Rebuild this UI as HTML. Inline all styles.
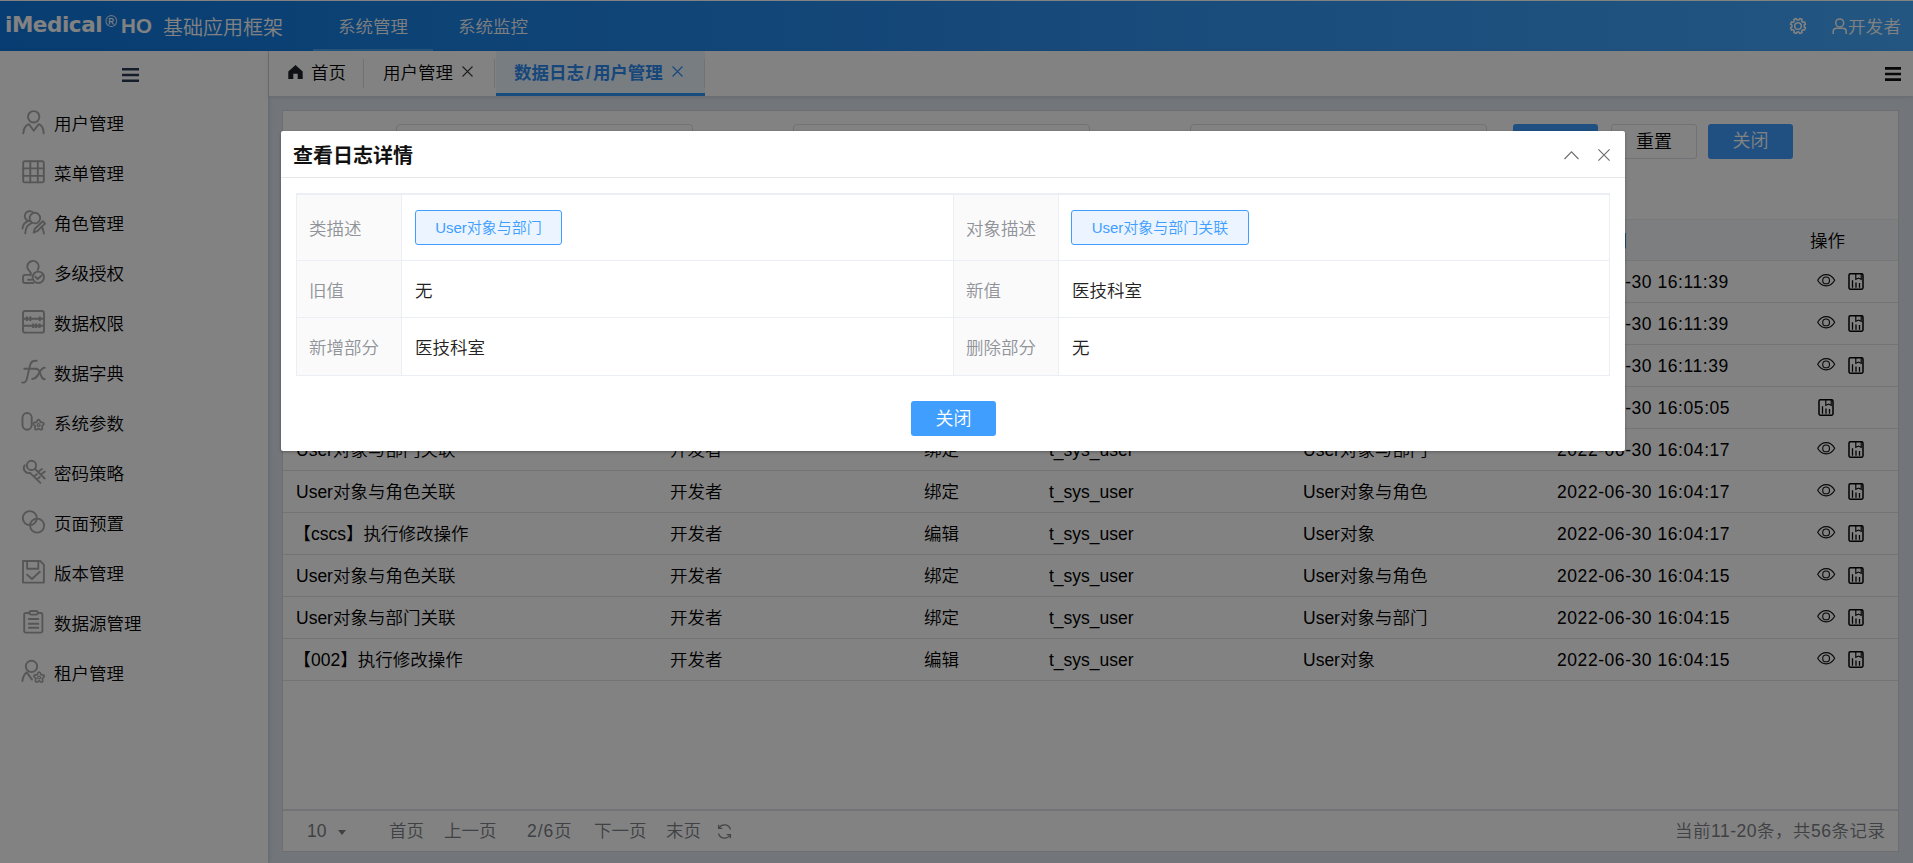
<!DOCTYPE html>
<html lang="zh-CN">
<head>
<meta charset="utf-8">
<title>iMedical HO 基础应用框架</title>
<style>
*{box-sizing:border-box;margin:0;padding:0}
html,body{width:1913px;height:863px;overflow:hidden;background:#dfe6ee}
body{font-family:"Liberation Sans","Noto Sans CJK SC DemiLight","Noto Sans CJK SC",sans-serif;font-size:17.5px;color:#000;position:relative}
.bd{font-family:"Liberation Sans","Noto Sans CJK SC",sans-serif;font-weight:bold}
.abs{position:absolute}
svg{display:block;overflow:visible}
/* header */
#topline{left:0;top:0;width:1913px;height:1px;background:#fff}
#hdr{left:0;top:1px;width:1913px;height:50px;background:linear-gradient(90deg,#0f79df 0%,#2b8eee 50%,#47a9ff 100%)}
#logo{left:5px;top:9px;height:32px;line-height:32px;white-space:nowrap;color:#fff}
#logo b{font-family:"DejaVu Sans","Liberation Sans",sans-serif;font-size:21.5px;font-weight:bold;letter-spacing:-.45px}
#logo sup{font-size:16px;font-weight:normal;position:relative;top:1px;margin-left:3px;vertical-align:6px;line-height:0}
#logo i{font-style:normal;font-weight:bold;font-size:20.5px;letter-spacing:.2px;margin-left:4px;position:relative;top:1px}
#appname{left:163px;top:13px;font-size:20px;line-height:30px;color:#fff;white-space:nowrap}
.nav{top:1px;height:50px;line-height:52px;color:#fff;font-size:17.5px;white-space:nowrap;opacity:.96}
#navline{left:313px;top:49px;width:120px;height:2px;background:#4aa5f6}
/* sidebar */
#side{left:0;top:51px;width:268px;height:812px;background:#fff;box-shadow:1px 0 4px rgba(0,21,41,.12)}
.mi{left:54px;height:30px;line-height:32px;color:#000;white-space:nowrap}
.ic{left:21px;width:26px;height:26px}
.ic svg{width:26px;height:26px;fill:none;stroke:#aaa;stroke-width:1.9;stroke-linecap:round;stroke-linejoin:round}
/* tabs */
#tabs{left:269px;top:51px;width:1644px;height:45px;background:#fff;box-shadow:0 1px 4px rgba(0,21,41,.1)}
.tab{top:51px;height:45px;line-height:44px;white-space:nowrap;color:#000}
.sep{top:59px;width:1px;height:29px;background:#dcdfe6}
/* main panel */
#panel{left:282px;top:110px;width:1617px;height:742px;background:#fff;border:1px solid #d5d8dc}
.inp{top:124px;width:297px;height:35px;border:1px solid #dcdfe6;border-radius:4px;background:#fff}
.btn{top:124px;width:85px;height:35px;border-radius:3px;text-align:center;line-height:35px;font-size:18px;white-space:nowrap}
.btn.p{background:#409eff;color:#fff}
.btn.d{background:#fff;color:#000;border:1px solid #dcdfe6}
#thead{left:283px;top:219px;width:1615px;height:42px;background:#f5f7fa;border-top:1px solid #ebeef5;border-bottom:1px solid #e4e7ed}
.th{top:219px;height:42px;line-height:44px;white-space:nowrap;color:#000}
.row{left:283px;width:1615px;height:42px;border-bottom:1px solid #e3e4e6}
.c{position:absolute;top:0;height:42px;line-height:43px;white-space:nowrap;color:#000}
.c1{left:13px}.c2{left:387px}.c3{left:641px}.c4{left:766px}.c5{left:1020px}.c6{left:1274px;letter-spacing:.56px}
.eye{position:absolute;left:1533.500px;top:12.800px;width:18.400px;height:12.600px}
.dl{position:absolute;left:1565px;top:12px;width:16px;height:17px}
.dl.solo{left:1535px}
#pager{left:283px;top:809px;width:1615px;height:42px;border-top:2px solid #dfe2e8;background:#fff;color:#7a7d82}
.pg{top:811px;height:40px;line-height:40px;white-space:nowrap;color:#7d8085}
/* overlay + modal */
#mask{left:0;top:0;width:1913px;height:863px;background:rgba(0,0,0,.49)}
#dlg{left:281px;top:131px;width:1344px;height:320px;background:#fff;border-radius:2px;box-shadow:0 1px 3px rgba(0,0,0,.3)}
#dlgt{left:12px;top:10px;height:30px;line-height:31px;font-size:20px;font-weight:bold;color:#111;font-family:"Liberation Sans","Noto Sans CJK SC",sans-serif;white-space:nowrap}
#dlgl{left:0;top:46px;width:1344px;height:1px;background:#e6e6e6}
#dt{left:15px;top:62px;width:1314px;height:183px;border:1px solid #ebeef5;border-top-width:2px}
.lab{position:absolute;padding-top:2px;background:#fafafa;color:#909399;white-space:nowrap;padding-left:12px;border-right:1px solid #ebeef5;border-left:1px solid #ebeef5}
.val{position:absolute;padding-top:2px;color:#222;white-space:nowrap;padding-left:13px}
.hl{position:absolute;left:0;width:1312px;height:1px;background:#ebeef5}
.tag{position:absolute;top:15px;height:35px;line-height:33px;border:1px solid #409eff;border-radius:3px;background:#ecf5ff;color:#409eff;font-size:15px;text-align:center;white-space:nowrap}
#dbtn{left:630px;top:270px;width:85px;height:35px;background:#409eff;border-radius:3px;color:#fff;font-size:18px;line-height:36px;text-align:center}
</style>
</head>
<body>
<!-- HEADER -->
<div class="abs" id="hdr"></div>
<div class="abs" id="topline"></div>
<div class="abs" id="logo"><b>iMedical</b><sup>®</sup><i>HO</i></div>
<div class="abs" id="appname">基础应用框架</div>
<div class="abs nav" style="left:338px">系统管理</div>
<div class="abs nav" style="left:458px">系统监控</div>
<div class="abs" id="navline"></div>
<div class="abs" style="left:1787.600px;top:16.100px;width:20px;height:20px"><svg viewBox="0 0 20 20" width="20" height="20" fill="none" stroke="#fff" stroke-width="1.500" stroke-linejoin="round"><circle cx="10" cy="10" r="3.300"/><path d="M16.12 10.97L17.51 11.68L16.50 14.13L15.02 13.64L13.64 15.02L14.13 16.50L11.68 17.51L10.97 16.12L9.03 16.12L8.32 17.51L5.87 16.50L6.36 15.02L4.98 13.64L3.50 14.13L2.49 11.68L3.88 10.97L3.88 9.03L2.49 8.32L3.50 5.87L4.98 6.36L6.36 4.98L5.87 3.50L8.32 2.49L9.03 3.88L10.97 3.88L11.68 2.49L14.13 3.50L13.64 4.98L15.02 6.36L16.50 5.87L17.51 8.32L16.12 9.03z"/></svg></div>
<div class="abs" style="left:1832px;top:18px;width:15px;height:16px"><svg viewBox="0 0 15 16" width="15" height="16" fill="none" stroke="#fff" stroke-width="1.500"><circle cx="7.700" cy="4.900" r="4"/><path d="M1.200 16v-2.400c0-2.200 1.400-3.400 3.400-3.400h6.200c2 0 3.400 1.200 3.400 3.400V16"/></svg></div>
<div class="abs nav" style="left:1848px;opacity:1;letter-spacing:.3px">开发者</div>

<!-- SIDEBAR -->
<div class="abs" id="side"></div>
<div class="abs" style="left:122px;top:68px;width:17px;height:14px"><svg viewBox="0 0 17 14" width="17" height="14"><path d="M0 1.200h17M0 7h17M0 12.800h17" stroke="#2b3a55" stroke-width="2.400"/></svg></div>

<!--MENU-->
<div class="abs ic" style="top:109px"><svg viewBox="0 0 26 26"><circle cx="12.700" cy="7.800" r="5.700"/><path d="M2.300 24.400C2.600 20 4.500 16.400 8 15.200L12.800 21.800L17.600 15.200C21 16.400 22.500 20 22.700 24.400"/></svg></div><div class="abs mi" style="top:108px">用户管理</div>
<div class="abs ic" style="top:159px"><svg viewBox="0 0 26 26"><rect x="2.200" y="2.300" width="20.600" height="21.100" rx="1.500"/><path d="M2.200 9.400h20.600M2.200 16.900h20.600M9.300 2.300v21.100M16.800 2.300v21.100"/></svg></div><div class="abs mi" style="top:158px">菜单管理</div>
<div class="abs ic" style="top:209px"><svg viewBox="0 0 26 26"><circle cx="13.900" cy="9.100" r="5.300"/><path d="M9.300 11.900A4.900 4.900 0 1 1 12.400 3.900"/><path d="M1.500 19.500C2 15.500 4 13 7.300 12"/><path d="M4.200 24.400C4.500 19 6.500 15.500 10.200 14.300"/><path d="M12.600 23.500l1.200-3.700 8-7.600 2.300 2.400-8 7.600z"/><path d="M20.600 17.600C21.900 19.300 22.600 21.600 22.900 24.600"/></svg></div><div class="abs mi" style="top:208px">角色管理</div>
<div class="abs ic" style="top:259px"><svg viewBox="0 0 26 26"><path d="M9.600 15.900c.6-1.200 .2-2.500-.87-3.630A5.700 5.700 0 1 1 16.670 10.870"/><path d="M9.600 15.900H4.400C2.900 15.900 2 16.800 2 18.300V21.900c0 1.300.9 2.100 2.100 2.100h8.300"/><path d="M7.100 20.700h3.400"/><circle cx="17.300" cy="18.300" r="5.700"/><path d="M14.200 17.600l2.400 2.400 4-3.500"/></svg></div><div class="abs mi" style="top:258px">多级授权</div>
<div class="abs ic" style="top:309px"><svg viewBox="0 0 26 26"><rect x="2" y="2" width="21" height="21.600" rx="2.200"/><path d="M2 9.800h21M2 16.800h21"/><path d="M5.900 7.600v4.400M9.300 7.600v4.400M18.800 7.600v4.400M12.200 14.600v4.400M15.100 14.600v4.400M18.500 14.600v4.400" stroke-width="2.200" stroke-linecap="butt"/></svg></div><div class="abs mi" style="top:308px">数据权限</div>
<div class="abs ic" style="top:359px"><svg viewBox="0 0 26 26"><path d="M1.200 23.400c2.300.7 3.900-.4 4.600-3.300L9 6.400c.8-3.200 3-5 6.700-4.500"/><path d="M3.300 9.800h12"/><path d="M15.200 9.800c2 .2 2.900 1.500 3.700 3.700l1.100 3.100c.8 2.300 1.900 3.600 3.700 3.600"/><path d="M23.700 8.700c-2.300 0-3.500 1.400-5 4.300-1.800 3.600-3.500 7-7.500 7"/></svg></div><div class="abs mi" style="top:358px">数据字典</div>
<div class="abs ic" style="top:409px"><svg viewBox="0 0 26 26"><rect x="1.500" y="4" width="9.200" height="16.700" rx="4.600"/><path d="M22.10 16.10L21.58 16.52L21.15 16.86L20.93 17.18L20.92 17.58L21.06 18.10L21.24 18.75L21.32 19.45L21.19 20.09L20.83 20.55L20.28 20.75L19.63 20.67L18.99 20.38L18.43 20.01L17.98 19.71L17.60 19.60L17.22 19.71L16.77 20.01L16.21 20.38L15.57 20.67L14.92 20.75L14.37 20.55L14.01 20.09L13.88 19.45L13.96 18.75L14.14 18.10L14.28 17.58L14.27 17.18L14.05 16.86L13.62 16.52L13.10 16.10L12.63 15.58L12.35 14.98L12.37 14.40L12.70 13.92L13.27 13.60L13.96 13.45L14.63 13.42L15.17 13.40L15.54 13.27L15.78 12.95L15.97 12.45L16.21 11.82L16.56 11.21L17.04 10.76L17.60 10.60L18.16 10.76L18.64 11.21L18.99 11.82L19.23 12.45L19.42 12.95L19.66 13.27L20.03 13.40L20.57 13.42L21.24 13.45L21.93 13.60L22.50 13.92L22.83 14.40L22.85 14.98L22.57 15.58z" stroke-width="1.700"/><circle cx="17.600" cy="16.100" r="1.400" stroke-width="1.300"/></svg></div><div class="abs mi" style="top:408px">系统参数</div>
<div class="abs ic" style="top:459px"><svg viewBox="0 0 26 26"><circle cx="10.500" cy="6.400" r="4.600"/><path d="M13.900 9.800l9.800 9.700M17.300 12.700l3.600-2.800M20.300 15.300l3.600-2.800"/><path d="M3.700 6.200A5 5 0 0 0 9 13.900"/><path d="M9 13.900l10.400 10M13 17.500l2.900-2.300M15.900 20.400l2.900-2.300"/></svg></div><div class="abs mi" style="top:458px">密码策略</div>
<div class="abs ic" style="top:509px"><svg viewBox="0 0 26 26"><circle cx="8.800" cy="9.100" r="7"/><circle cx="16.100" cy="16.600" r="7"/></svg></div><div class="abs mi" style="top:508px">页面预置</div>
<div class="abs ic" style="top:559px"><svg viewBox="0 0 26 26"><path d="M2 2h17.200l3.700 3.700v17.900H2z"/><path d="M6.100 2v7.800h11.200V2"/><path d="M6.100 15.600l4.900 4.400 7.800-7.300"/></svg></div><div class="abs mi" style="top:558px">版本管理</div>
<div class="abs ic" style="top:609px"><svg viewBox="0 0 26 26"><path d="M8.400 4H4.700C3.800 4 3.200 4.600 3.200 5.500v16.600c0 .9.600 1.500 1.500 1.500h15.200c.9 0 1.500-.6 1.500-1.500V5.500c0-.9-.6-1.500-1.500-1.500h-3.100"/><rect x="8.400" y="2" width="8.400" height="3.600" rx="1.800"/><path d="M7.100 10h11M7.100 14.700h11M7.100 18.800h11" stroke-width="2.100" stroke-linecap="butt"/></svg></div><div class="abs mi" style="top:608px">数据源管理</div>
<div class="abs ic" style="top:659px"><svg viewBox="0 0 26 26"><circle cx="10.500" cy="7.400" r="5.700"/><path d="M1.400 22C2 18 3.500 15 5.800 13.400L11 20.600"/><path d="M22.50 18.50L21.98 18.91L21.56 19.23L21.33 19.55L21.33 19.94L21.48 20.45L21.66 21.09L21.74 21.78L21.62 22.41L21.27 22.87L20.73 23.06L20.09 22.98L19.46 22.68L18.91 22.31L18.47 22.01L18.10 21.90L17.73 22.01L17.29 22.31L16.74 22.68L16.11 22.98L15.47 23.06L14.93 22.87L14.58 22.41L14.46 21.78L14.54 21.09L14.72 20.45L14.87 19.94L14.87 19.55L14.64 19.23L14.22 18.91L13.70 18.50L13.23 17.99L12.95 17.41L12.96 16.83L13.29 16.36L13.86 16.05L14.54 15.91L15.20 15.89L15.74 15.87L16.10 15.75L16.33 15.44L16.51 14.94L16.74 14.32L17.08 13.71L17.55 13.26L18.10 13.10L18.65 13.26L19.12 13.71L19.46 14.32L19.69 14.94L19.87 15.44L20.10 15.75L20.46 15.87L21.00 15.89L21.66 15.91L22.34 16.05L22.91 16.36L23.24 16.83L23.25 17.41L22.97 17.99z" stroke-width="1.700"/><circle cx="18.100" cy="18.500" r="1.400" stroke-width="1.300"/></svg></div><div class="abs mi" style="top:658px">租户管理</div>
<!--/MENU-->

<!-- TABS -->
<div class="abs" id="tabs"></div>
<div class="abs" style="left:496px;top:51px;width:209px;height:45px;background:#ebf5ff;border-bottom:3px solid #2b95f8"></div>
<div class="abs" style="left:288px;top:65px;width:15px;height:14px"><svg viewBox="0 0 15 14" width="15" height="14"><path d="M7.500 0L0.300 6.400V14H5.300V8.800H9.700V14H14.700V6.400z" fill="#1f2329"/></svg></div>
<div class="abs tab" style="left:311px">首页</div>
<div class="abs sep" style="left:363px"></div>
<div class="abs tab" style="left:383px">用户管理</div>
<div class="abs" style="left:462px;top:66px;width:11px;height:11px"><svg viewBox="0 0 11 11" width="11" height="11"><path d="M0.500 0.500l10 10M10.500 0.500l-10 10" stroke="#3a3d42" stroke-width="1.100"/></svg></div>
<div class="abs sep" style="left:494px"></div>
<div class="abs tab bd" style="left:514px;color:#2d8cf0">数据日志<span style="padding:0 2px">/</span>用户管理</div>
<div class="abs" style="left:672px;top:66px;width:11px;height:11px"><svg viewBox="0 0 11 11" width="11" height="11"><path d="M0.500 0.500l10 10M10.500 0.500l-10 10" stroke="#2d8cf0" stroke-width="1.100"/></svg></div>
<div class="abs sep" style="left:704px"></div>
<div class="abs" style="left:1885px;top:67px;width:16px;height:14px"><svg viewBox="0 0 16 14" width="16" height="14"><path d="M0 1.400h16M0 7h16M0 12.600h16" stroke="#111" stroke-width="2.600"/></svg></div>

<!-- PANEL -->
<div class="abs" id="panel"></div>
<div class="abs inp" style="left:396px"></div>
<div class="abs inp" style="left:793px"></div>
<div class="abs inp" style="left:1190px"></div>
<div class="abs btn p" style="left:1513px">查询</div>
<div class="abs btn d" style="left:1611px;width:86px">重置</div>
<div class="abs btn p" style="left:1708px">关闭</div>
<div class="abs" id="thead"></div>
<div class="abs th" style="left:296px">描述</div>
<div class="abs th" style="left:670px">操作人</div>
<div class="abs th" style="left:924px">操作类型</div>
<div class="abs th" style="left:1049px">表名</div>
<div class="abs th" style="left:1303px">类描述</div>
<div class="abs th" style="left:1557px">操作时间</div>
<div class="abs th" style="left:1810px">操作</div>
<!--ROWS-->
<div class="abs row" style="top:261px"><span class="c c1">User对象与部门关联</span><span class="c c2">开发者</span><span class="c c3">绑定</span><span class="c c4">t_sys_user</span><span class="c c5">User对象与部门</span><span class="c c6">2022-06-30 16:11:39</span><svg class="eye" viewBox="0 0 19 13" preserveAspectRatio="none"><path d="M0.700 6.500C3 2.600 6 .7 9.500 .7s6.500 1.900 8.800 5.800c-2.300 3.900-5.300 5.800-8.800 5.800S3 10.400.7 6.500z" fill="none" stroke="#111" stroke-width="1.150"/><circle cx="9.400" cy="6.600" r="3.500" fill="none" stroke="#111" stroke-width="1.150"/></svg><svg class="dl" viewBox="0 0 16 17"><rect x="1" y="0.750" width="14" height="15.500" rx="1.400" fill="none" stroke="#000" stroke-width="1.500"/><path d="M7.800 1v5.400l2.700-1.400 2.700 1.400V1" fill="none" stroke="#000" stroke-width="1.100"/><path d="M4.500 7.300v7.500M8 9.500v5.300M11.500 10v4.800" fill="none" stroke="#000" stroke-width="1.300"/></svg></div>
<div class="abs row" style="top:303px"><span class="c c1">User对象与角色关联</span><span class="c c2">开发者</span><span class="c c3">绑定</span><span class="c c4">t_sys_user</span><span class="c c5">User对象与角色</span><span class="c c6">2022-06-30 16:11:39</span><svg class="eye" viewBox="0 0 19 13" preserveAspectRatio="none"><path d="M0.700 6.500C3 2.600 6 .7 9.500 .7s6.500 1.900 8.800 5.800c-2.300 3.900-5.300 5.800-8.800 5.800S3 10.400.7 6.500z" fill="none" stroke="#111" stroke-width="1.150"/><circle cx="9.400" cy="6.600" r="3.500" fill="none" stroke="#111" stroke-width="1.150"/></svg><svg class="dl" viewBox="0 0 16 17"><rect x="1" y="0.750" width="14" height="15.500" rx="1.400" fill="none" stroke="#000" stroke-width="1.500"/><path d="M7.800 1v5.400l2.700-1.400 2.700 1.400V1" fill="none" stroke="#000" stroke-width="1.100"/><path d="M4.500 7.300v7.500M8 9.500v5.300M11.500 10v4.800" fill="none" stroke="#000" stroke-width="1.300"/></svg></div>
<div class="abs row" style="top:345px"><span class="c c1" style="margin-left:-2.500px">【cscs】执行修改操作</span><span class="c c2">开发者</span><span class="c c3">编辑</span><span class="c c4">t_sys_user</span><span class="c c5">User对象</span><span class="c c6">2022-06-30 16:11:39</span><svg class="eye" viewBox="0 0 19 13" preserveAspectRatio="none"><path d="M0.700 6.500C3 2.600 6 .7 9.500 .7s6.500 1.900 8.800 5.800c-2.300 3.900-5.300 5.800-8.800 5.800S3 10.400.7 6.500z" fill="none" stroke="#111" stroke-width="1.150"/><circle cx="9.400" cy="6.600" r="3.500" fill="none" stroke="#111" stroke-width="1.150"/></svg><svg class="dl" viewBox="0 0 16 17"><rect x="1" y="0.750" width="14" height="15.500" rx="1.400" fill="none" stroke="#000" stroke-width="1.500"/><path d="M7.800 1v5.400l2.700-1.400 2.700 1.400V1" fill="none" stroke="#000" stroke-width="1.100"/><path d="M4.500 7.300v7.500M8 9.500v5.300M11.500 10v4.800" fill="none" stroke="#000" stroke-width="1.300"/></svg></div>
<div class="abs row" style="top:387px"><span class="c c1" style="margin-left:-2.500px">【cscs】执行新增操作</span><span class="c c2">开发者</span><span class="c c3">新增</span><span class="c c4">t_sys_user</span><span class="c c5">User对象</span><span class="c c6">2022-06-30 16:05:05</span><svg class="dl solo" viewBox="0 0 16 17"><rect x="1" y="0.750" width="14" height="15.500" rx="1.400" fill="none" stroke="#000" stroke-width="1.500"/><path d="M7.800 1v5.400l2.700-1.400 2.700 1.400V1" fill="none" stroke="#000" stroke-width="1.100"/><path d="M4.500 7.300v7.500M8 9.500v5.300M11.500 10v4.800" fill="none" stroke="#000" stroke-width="1.300"/></svg></div>
<div class="abs row" style="top:429px"><span class="c c1">User对象与部门关联</span><span class="c c2">开发者</span><span class="c c3">绑定</span><span class="c c4">t_sys_user</span><span class="c c5">User对象与部门</span><span class="c c6">2022-06-30 16:04:17</span><svg class="eye" viewBox="0 0 19 13" preserveAspectRatio="none"><path d="M0.700 6.500C3 2.600 6 .7 9.500 .7s6.500 1.900 8.800 5.800c-2.300 3.900-5.300 5.800-8.800 5.800S3 10.400.7 6.500z" fill="none" stroke="#111" stroke-width="1.150"/><circle cx="9.400" cy="6.600" r="3.500" fill="none" stroke="#111" stroke-width="1.150"/></svg><svg class="dl" viewBox="0 0 16 17"><rect x="1" y="0.750" width="14" height="15.500" rx="1.400" fill="none" stroke="#000" stroke-width="1.500"/><path d="M7.800 1v5.400l2.700-1.400 2.700 1.400V1" fill="none" stroke="#000" stroke-width="1.100"/><path d="M4.500 7.300v7.500M8 9.500v5.300M11.500 10v4.800" fill="none" stroke="#000" stroke-width="1.300"/></svg></div>
<div class="abs row" style="top:471px"><span class="c c1">User对象与角色关联</span><span class="c c2">开发者</span><span class="c c3">绑定</span><span class="c c4">t_sys_user</span><span class="c c5">User对象与角色</span><span class="c c6">2022-06-30 16:04:17</span><svg class="eye" viewBox="0 0 19 13" preserveAspectRatio="none"><path d="M0.700 6.500C3 2.600 6 .7 9.500 .7s6.500 1.900 8.800 5.800c-2.300 3.900-5.300 5.800-8.800 5.800S3 10.400.7 6.500z" fill="none" stroke="#111" stroke-width="1.150"/><circle cx="9.400" cy="6.600" r="3.500" fill="none" stroke="#111" stroke-width="1.150"/></svg><svg class="dl" viewBox="0 0 16 17"><rect x="1" y="0.750" width="14" height="15.500" rx="1.400" fill="none" stroke="#000" stroke-width="1.500"/><path d="M7.800 1v5.400l2.700-1.400 2.700 1.400V1" fill="none" stroke="#000" stroke-width="1.100"/><path d="M4.500 7.300v7.500M8 9.500v5.300M11.500 10v4.800" fill="none" stroke="#000" stroke-width="1.300"/></svg></div>
<div class="abs row" style="top:513px"><span class="c c1" style="margin-left:-2.500px">【cscs】执行修改操作</span><span class="c c2">开发者</span><span class="c c3">编辑</span><span class="c c4">t_sys_user</span><span class="c c5">User对象</span><span class="c c6">2022-06-30 16:04:17</span><svg class="eye" viewBox="0 0 19 13" preserveAspectRatio="none"><path d="M0.700 6.500C3 2.600 6 .7 9.500 .7s6.500 1.900 8.800 5.800c-2.300 3.900-5.300 5.800-8.800 5.800S3 10.400.7 6.500z" fill="none" stroke="#111" stroke-width="1.150"/><circle cx="9.400" cy="6.600" r="3.500" fill="none" stroke="#111" stroke-width="1.150"/></svg><svg class="dl" viewBox="0 0 16 17"><rect x="1" y="0.750" width="14" height="15.500" rx="1.400" fill="none" stroke="#000" stroke-width="1.500"/><path d="M7.800 1v5.400l2.700-1.400 2.700 1.400V1" fill="none" stroke="#000" stroke-width="1.100"/><path d="M4.500 7.300v7.500M8 9.500v5.300M11.500 10v4.800" fill="none" stroke="#000" stroke-width="1.300"/></svg></div>
<div class="abs row" style="top:555px"><span class="c c1">User对象与角色关联</span><span class="c c2">开发者</span><span class="c c3">绑定</span><span class="c c4">t_sys_user</span><span class="c c5">User对象与角色</span><span class="c c6">2022-06-30 16:04:15</span><svg class="eye" viewBox="0 0 19 13" preserveAspectRatio="none"><path d="M0.700 6.500C3 2.600 6 .7 9.500 .7s6.500 1.900 8.800 5.800c-2.300 3.900-5.300 5.800-8.800 5.800S3 10.400.7 6.500z" fill="none" stroke="#111" stroke-width="1.150"/><circle cx="9.400" cy="6.600" r="3.500" fill="none" stroke="#111" stroke-width="1.150"/></svg><svg class="dl" viewBox="0 0 16 17"><rect x="1" y="0.750" width="14" height="15.500" rx="1.400" fill="none" stroke="#000" stroke-width="1.500"/><path d="M7.800 1v5.400l2.700-1.400 2.700 1.400V1" fill="none" stroke="#000" stroke-width="1.100"/><path d="M4.500 7.300v7.500M8 9.500v5.300M11.500 10v4.800" fill="none" stroke="#000" stroke-width="1.300"/></svg></div>
<div class="abs row" style="top:597px"><span class="c c1">User对象与部门关联</span><span class="c c2">开发者</span><span class="c c3">绑定</span><span class="c c4">t_sys_user</span><span class="c c5">User对象与部门</span><span class="c c6">2022-06-30 16:04:15</span><svg class="eye" viewBox="0 0 19 13" preserveAspectRatio="none"><path d="M0.700 6.500C3 2.600 6 .7 9.500 .7s6.500 1.900 8.800 5.800c-2.300 3.900-5.300 5.800-8.800 5.800S3 10.400.7 6.500z" fill="none" stroke="#111" stroke-width="1.150"/><circle cx="9.400" cy="6.600" r="3.500" fill="none" stroke="#111" stroke-width="1.150"/></svg><svg class="dl" viewBox="0 0 16 17"><rect x="1" y="0.750" width="14" height="15.500" rx="1.400" fill="none" stroke="#000" stroke-width="1.500"/><path d="M7.800 1v5.400l2.700-1.400 2.700 1.400V1" fill="none" stroke="#000" stroke-width="1.100"/><path d="M4.500 7.300v7.500M8 9.500v5.300M11.500 10v4.800" fill="none" stroke="#000" stroke-width="1.300"/></svg></div>
<div class="abs row" style="top:639px"><span class="c c1" style="margin-left:-2.500px">【002】执行修改操作</span><span class="c c2">开发者</span><span class="c c3">编辑</span><span class="c c4">t_sys_user</span><span class="c c5">User对象</span><span class="c c6">2022-06-30 16:04:15</span><svg class="eye" viewBox="0 0 19 13" preserveAspectRatio="none"><path d="M0.700 6.500C3 2.600 6 .7 9.500 .7s6.500 1.900 8.800 5.800c-2.300 3.900-5.300 5.800-8.800 5.800S3 10.400.7 6.500z" fill="none" stroke="#111" stroke-width="1.150"/><circle cx="9.400" cy="6.600" r="3.500" fill="none" stroke="#111" stroke-width="1.150"/></svg><svg class="dl" viewBox="0 0 16 17"><rect x="1" y="0.750" width="14" height="15.500" rx="1.400" fill="none" stroke="#000" stroke-width="1.500"/><path d="M7.800 1v5.400l2.700-1.400 2.700 1.400V1" fill="none" stroke="#000" stroke-width="1.100"/><path d="M4.500 7.300v7.500M8 9.500v5.300M11.500 10v4.800" fill="none" stroke="#000" stroke-width="1.300"/></svg></div>
<!--/ROWS-->
<div class="abs" id="pager"></div>
<div class="abs pg" style="left:307px">10</div>
<div class="abs" style="left:338px;top:830px;width:0;height:0;border-left:4px solid transparent;border-right:4px solid transparent;border-top:5px solid #7d8085"></div>
<div class="abs pg" style="left:389px">首页</div>
<div class="abs pg" style="left:444px">上一页</div>
<div class="abs pg" style="left:527px;letter-spacing:.9px">2/6页</div>
<div class="abs pg" style="left:594px">下一页</div>
<div class="abs pg" style="left:666px">末页</div>
<div class="abs" style="left:716px;top:823px;width:17px;height:17px"><svg viewBox="0 0 17 17" width="17" height="17" fill="none" stroke="#85888d" stroke-width="1.250"><path d="M14.500 6.500A6.300 6.300 0 0 0 3 5M2.500 10.500A6.300 6.300 0 0 0 14 12"/><path d="M2.600 1.800V5.400H6.200M14.400 15.200V11.600H10.800"/></svg></div>
<div class="abs pg" style="left:1675px;letter-spacing:.5px">当前11-20条，共56条记录</div>

<!-- MASK + DIALOG -->
<div class="abs" id="mask"></div>
<div class="abs" id="dlg">
  <div class="abs" id="dlgt">查看日志详情</div>
  <div class="abs" style="left:1283px;top:19.800px;width:15px;height:9px"><svg viewBox="0 0 15 9" width="15" height="9"><path d="M0.500 8L7.500 .9l7 7.100" fill="none" stroke="#6e6e6e" stroke-width="1.150"/></svg></div>
  <div class="abs" style="left:1317px;top:17.500px;width:12px;height:12px"><svg viewBox="0 0 12 12" width="12" height="12"><path d="M0.400 0.400l11.200 11.200M11.600 0.400l-11.200 11.200" stroke="#6e6e6e" stroke-width="1.150"/></svg></div>
  <div class="abs" id="dlgl"></div>
  <div class="abs" id="dt">
    <div class="hl" style="top:65px"></div>
    <div class="hl" style="top:122px"></div>
    <div class="lab" style="left:-1px;top:0;width:106px;height:65px;line-height:65px">类描述</div>
    <div class="lab" style="left:-1px;top:66px;width:106px;height:56px;line-height:56px">旧值</div>
    <div class="lab" style="left:-1px;top:123px;width:106px;height:57px;line-height:57px">新增部分</div>
    <div class="lab" style="left:656px;top:0;width:106px;height:65px;line-height:65px">对象描述</div>
    <div class="lab" style="left:656px;top:66px;width:106px;height:56px;line-height:56px">新值</div>
    <div class="lab" style="left:656px;top:123px;width:106px;height:57px;line-height:57px">删除部分</div>
    <div class="tag" style="left:118px;width:147px">User对象与部门</div>
    <div class="tag" style="left:774px;width:178px">User对象与部门关联</div>
    <div class="val" style="left:105px;top:66px;line-height:56px">无</div>
    <div class="val" style="left:105px;top:123px;line-height:57px">医技科室</div>
    <div class="val" style="left:762px;top:66px;line-height:56px">医技科室</div>
    <div class="val" style="left:762px;top:123px;line-height:57px">无</div>
  </div>
  <div class="abs" id="dbtn">关闭</div>
</div>
</body>
</html>
